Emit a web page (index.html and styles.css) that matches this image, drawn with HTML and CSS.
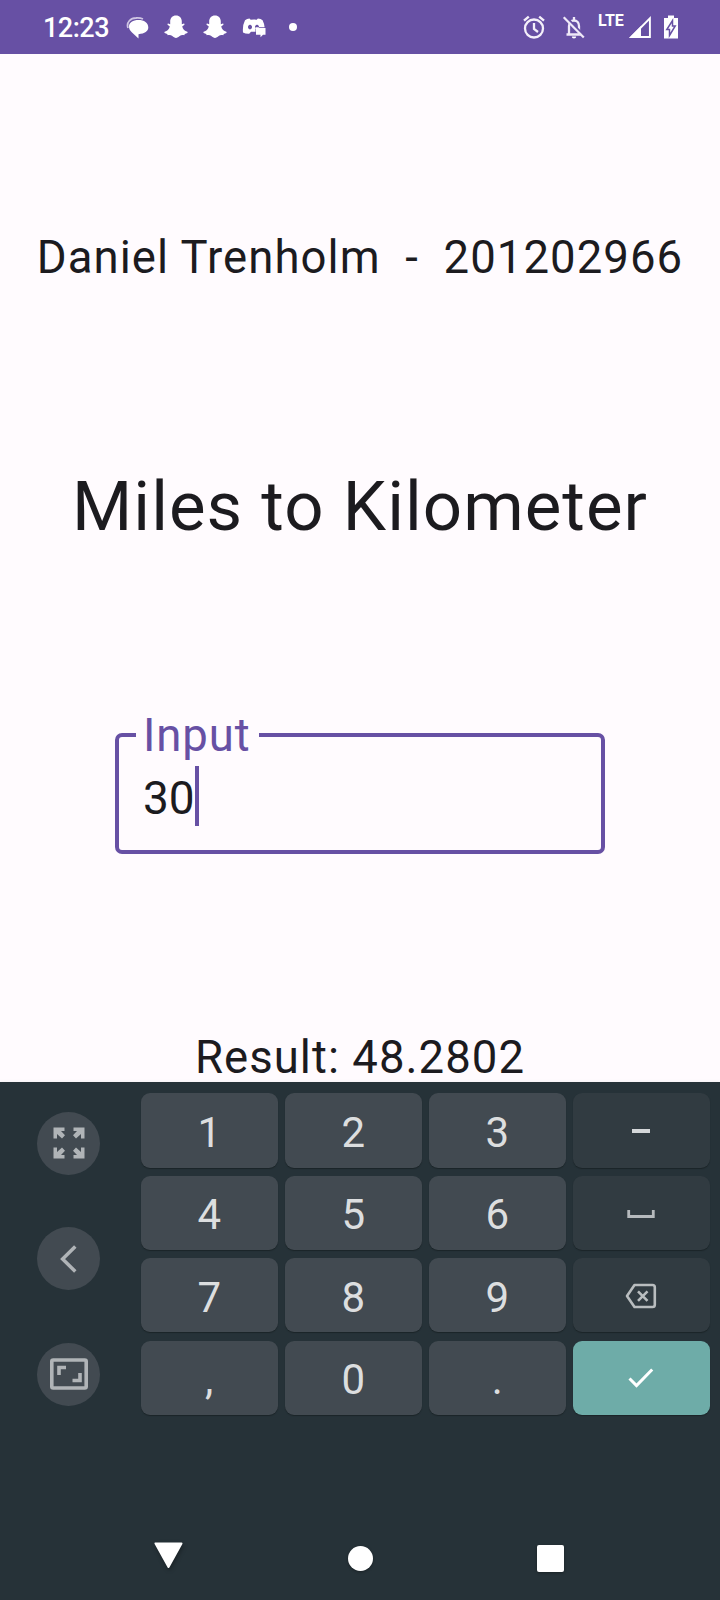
FILE: index.html
```html
<!DOCTYPE html>
<html lang="en">
<head>
<meta charset="utf-8">
<title>Miles to Kilometer</title>
<link rel="stylesheet" href="styles.css">
</head>
<body>
<header class="status">
  <span class="time">12:23</span>
  <svg class="chat" width="24" height="24" viewBox="0 0 24 24"><path d="M2 12C0 6 5 2 10 2q4-.3 7 1" fill="none" stroke="#cfc5e3" stroke-width="1.800"/><path d="M12.500 4C18 4 22.300 6.500 22.300 11.500c0 3.800-3.500 6-9.800 6.700V22.500l-6.500-6C4 14.500 3 13 3 10.500 3 6.500 7 4 12.500 4z" fill="#fff"/></svg>
  <svg class="snap" width="24" height="24" viewBox="0 0 24 24"><path id="ghost" d="M12 .5c3.600 0 5.800 2.600 5.800 6v2.800l2.100-.7c.8.200.9 1 .2 1.500l-1.900 1.300c.8 2.800 2.500 4.500 5.100 5.400.7.400.3 1.200-.6 1.500l-1.900.6-.5 1.300c-2.200-.4-3.400-.1-4.600.9-1.200 1.100-2.400 1.900-3.700 1.900s-2.500-.8-3.700-1.900c-1.200-1-2.400-1.300-4.600-.9L3.200 18.900l-1.900-.6c-.9-.3-1.300-1.100-.6-1.500 2.600-.9 4.300-2.600 5.100-5.400L3.900 10.100c-.7-.5-.6-1.300.2-1.500l2.100.7V6.500c0-3.400 2.200-6 5.800-6z" fill="#fff"/></svg>
  <svg class="snap" width="24" height="24" viewBox="0 0 24 24"><use href="#ghost"/></svg>
  <svg class="discord" width="24" height="24" viewBox="0 0 24 24"><path d="M7.500 3.500l1.200 1.200q3-.5 6 0L15.900 3.500q3 .3 4.700 1.800 1.600 3.200 2 7H13.500v4.500H9l-1.800 2Q3.500 19 1 17.500.3 10.500 3 5.300 5 3.800 7.500 3.500zM8 9.800a2 2.300 0 1 0 .01 0zM15 9.800a2 2.300 0 1 0 .01 0z" fill="#fff" fill-rule="evenodd"/><path d="M14 13h9.500v6.800h-2.500L18.500 22.200v-2.400H14z" fill="#fff"/></svg>
  <i class="dot"></i>
  <svg class="alarm" width="24" height="24" viewBox="0 0 24 24" fill="none" stroke="#f4f0fa"><circle cx="12" cy="13.500" r="9" stroke-width="2.300"/><path d="M12 8v6l4 3" stroke-width="2.300"/><path d="M2 5.700l4.800-4M22 5.700l-4.800-4" stroke-width="2.400"/></svg>
  <svg class="bell" width="24" height="24" viewBox="0 0 24 24"><path d="M4.500 19.500h15M7 19v-8c0-3 2-5.500 5-5.500s5 2.500 5 5.500v8M12 6V2" fill="none" stroke="#efe9f8" stroke-width="2.300"/><path d="M9.800 21.500h4.400a2.200 2 0 0 1-4.400 0z" fill="#fff"/><path d="M2.500 1.300L23 22.400" stroke="#6750a4" stroke-width="3.500"/><path d="M1.700 2.200L21.800 22.600" stroke="#efe9f8" stroke-width="2.200"/></svg>
  <span class="lte">LTE</span>
  <svg class="signal" width="22" height="22" viewBox="0 0 22 22"><path d="M0 22L12 10v12z" fill="#fff"/><path d="M2.400 21L20.900 2.400V21z" fill="none" stroke="#fff" stroke-width="1.900"/></svg>
  <svg class="battery" width="14" height="24" viewBox="0 0 14 24"><path d="M4 .5h6v2.500H14v20.500H0V3h4z" fill="#fff"/><path d="M8.500 5.500v5.500h2.700L5.500 20.500v-6H2.800z" fill="#fff" stroke="#6750a4" stroke-width="1.500"/></svg>
</header>
<main class="content">
  <p class="author">Daniel Trenholm&nbsp; -&nbsp; 201202966</p>
  <h1 class="title">Miles to Kilometer</h1>
  <div class="field">
    <label class="field-label">Input</label>
    <span class="field-value">30</span><i class="caret"></i>
  </div>
  <p class="result">Result: 48.2802</p>
</main>
<section class="keyboard">
  <div class="tools">
    <div class="tool"><svg width="32" height="32" viewBox="0 0 32 32" fill="#b0b4b7"><path id="arrow" d="M.5.500H11.500V4H8l4 4.300L9 11.500 4 7v4.500H.5z"/><use href="#arrow" transform="matrix(-1 0 0 1 32 0)"/><use href="#arrow" transform="matrix(1 0 0 -1 0 32)"/><use href="#arrow" transform="rotate(180 16 16)"/></svg></div>
    <div class="tool"><svg width="32" height="32" viewBox="0 0 32 32"><path d="M22.300 3.500L9.600 16l12.700 12.500" fill="none" stroke="#b0b4b7" stroke-width="3.500"/></svg></div>
    <div class="tool"><svg width="38" height="32" viewBox="0 0 38 32" fill="none" stroke="#b0b4b7"><rect x="1.800" y="2" width="34.400" height="28" rx="1.500" stroke-width="3.600"/><path d="M9 17V9.500h7M30 15v7.500h-7.500" stroke-width="3.600"/></svg></div>
  </div>
  <div class="keys">
    <div class="key">1</div><div class="key">2</div><div class="key">3</div>
    <div class="key side"><svg width="20" height="6" viewBox="0 0 20 6"><path d="M1 3h18" stroke="#d4d7d9" stroke-width="4"/></svg></div>
    <div class="key">4</div><div class="key">5</div><div class="key">6</div>
    <div class="key side"><svg width="28" height="10" viewBox="0 0 28 10"><path d="M1.700 1v6.500h24.600V1" fill="none" stroke="#b6babd" stroke-width="2.800"/></svg></div>
    <div class="key">7</div><div class="key">8</div><div class="key">9</div>
    <div class="key side"><svg width="32" height="26" viewBox="0 0 32 26" fill="none" stroke="#b9bdbf" stroke-width="2.600"><path d="M9.500 2H27.500q2.300 0 2.300 2.300V21.700q0 2.300-2.300 2.300H9.500L2 13z" stroke-linejoin="round"/><path d="M13 8.300l9.500 9.500M22.500 8.300L13 17.800"/></svg></div>
    <div class="key">,</div><div class="key">0</div><div class="key">.</div>
    <div class="key enter"><svg width="26" height="22" viewBox="0 0 26 22"><path d="M1.500 11.500l7 7L24.200 2.500" fill="none" stroke="#fff" stroke-width="3"/></svg></div>
  </div>
</section>
<nav class="nav">
  <svg class="back" width="30" height="28" viewBox="0 0 30 28"><path d="M2.500 1.500h26L15.500 25z" fill="#fff" stroke="#fff" stroke-width="2" stroke-linejoin="round"/></svg>
  <i class="home"></i>
  <i class="recent"></i>
</nav>
</body>
</html>
```
FILE: styles.css
```css
* { box-sizing: border-box; }
body {
  margin: 0;
  width: 720px;
  height: 1600px;
  overflow: hidden;
  display: flex;
  flex-direction: column;
  background: #fffbfe;
  color: #1c1b1f;
  font-family: Roboto, sans-serif;
}
svg { display: block; flex: none; }
.status {
  height: 54px;
  flex: none;
  display: flex;
  align-items: center;
  padding-left: 43px;
  background: #6750a4;
  color: #fff;
}
.time { width: 83px; padding-top: 1px; font-size: 27px; font-weight: 500; line-height: 32px; letter-spacing: -0.500px; }
.snap { margin-left: 15px; }
.chat { margin-top: 1px; }
.chat + .snap { margin-left: 14px; }
.discord { margin-left: 15px; }
.dot { width: 8px; height: 8px; margin-left: 23px; border-radius: 50%; background: #fff; }
.alarm { margin-left: 225px; }
.bell { margin-left: 16px; }
.lte { width: 30px; margin-left: 12px; padding-bottom: 12px; font-size: 16px; font-weight: 700; line-height: 16px; }
.signal { margin-left: 1px; }
.battery { margin-left: 13px; }
.content {
  height: 1028px;
  flex: none;
  display: flex;
  flex-direction: column;
  align-items: center;
}
.author, .title, .result { margin: 0; font-weight: 400; white-space: pre; }
.author, .result { font-size: 45.500px; line-height: 60px; letter-spacing: 1.050px; }
.author { padding-top: 174px; }
.title { padding-top: 177px; font-size: 69px; line-height: 84px; letter-spacing: 1.030px; }
.field {
  position: relative;
  width: 490px;
  height: 121px;
  margin-top: 184px;
  padding: 27px 24px;
  display: flex;
  border: 4px solid #6750a4;
  border-radius: 7px;
}
.field-label {
  position: absolute;
  left: 17px;
  top: -31px;
  width: 123px;
  padding-left: 7px;
  background: #fffbfe;
  color: #6750a4;
  font-size: 45.500px;
  line-height: 60px;
  letter-spacing: 0.900px;
}
.field-value { font-size: 46px; line-height: 68px; }
.caret { width: 4px; height: 62px; background: #6750a4; }
.result { padding-top: 174px; }
.keyboard {
  height: 443px;
  flex: none;
  display: flex;
  padding: 11.400px 10px 0 37px;
  background: #263238;
  box-shadow: 0 0 4px #0001;
}
.tools { width: 103.500px; display: flex; flex-direction: column; gap: 52.500px; padding-top: 18.600px; }
.tool {
  width: 63px;
  height: 63px;
  display: flex;
  align-items: center;
  justify-content: center;
  border-radius: 50%;
  background: #424a51;
}
.keys {
  flex: 1;
  display: grid;
  grid-template-columns: repeat(4, 1fr);
  grid-auto-rows: 74.200px;
  gap: 8.200px 6.600px;
}
.key {
  display: flex;
  align-items: center;
  justify-content: center;
  border-radius: 9px;
  background: #424a51;
  box-shadow: 0 1px 1px #1b2428;
  color: #dcdedf;
  font-size: 42px;
  line-height: 50px;
  padding-top: 5px;
}
.side { background: #313b41; padding-top: 2px; }
.enter { background: #6eaca8; padding-top: 1px; }
.nav {
  flex: 1;
  display: flex;
  align-items: center;
  padding: 0 0 11px 153px;
  background: #263238;
}
.back { margin-bottom: 2px; filter: drop-shadow(1px 2px 2px #0005); }
.home { width: 25px; height: 25px; margin: 3px 0 0 165px; border-radius: 50%; background: #fff; box-shadow: 0 1px 3px #0005; }
.recent { width: 27px; height: 27px; margin: 3px 0 0 164px; border-radius: 2px; background: #fff; box-shadow: 0 1px 3px #0005; }
```
